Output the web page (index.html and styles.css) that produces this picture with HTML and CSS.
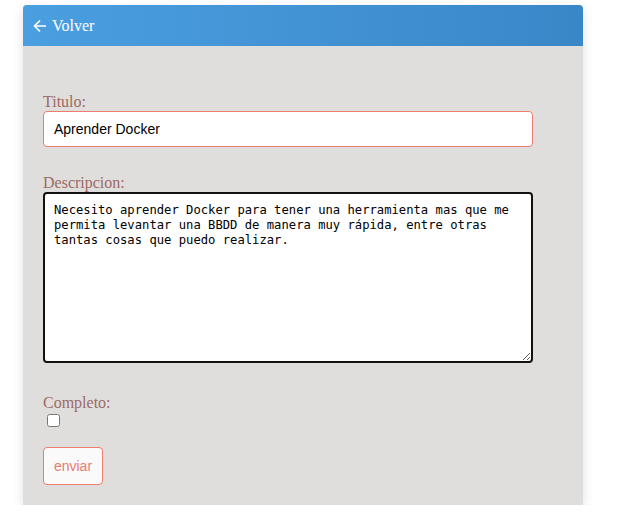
FILE: index.html
```html
<!DOCTYPE html>
<html>
<head>
<meta charset="utf-8">
<link rel="stylesheet" href="styles.css">
</head>
<body>
<div class="card">
  <div class="header">
    <svg class="arrow" width="14" height="14" viewBox="0 0 14 14"><path d="M13 7H1.5M7 1.5L1.5 7L7 12.5" fill="none" stroke="#fff" stroke-width="1.6"/></svg>
    <span>Volver</span>
  </div>
  <form class="body">
    <label class="lbl">Titulo:</label>
    <input class="inp" type="text" value="Aprender Docker">
    <label class="lbl lbl-desc">Descripcion:</label>
    <textarea class="ta">Necesito aprender Docker para tener una herramienta mas que me permita levantar una BBDD de manera muy rápida, entre otras tantas cosas que puedo realizar.</textarea>
    <label class="lbl lbl-comp">Completo:</label>
    <input class="chk" type="checkbox">
    <button class="btn" type="button">enviar</button>
  </form>
</div>
</body>
</html>
```
FILE: styles.css
```css
html, body { margin: 0; padding: 0; background: #fff; }
body { padding: 5px 0 0 23px; }
.card {
  width: 560px;
  height: 500px;
  background: #e0dedd;
  border-radius: 4px 4px 0 0;
  box-shadow: 0 4px 12px rgba(0,0,0,0.12);
  display: flex;
  flex-direction: column;
}
.header {
  height: 41px;
  box-sizing: border-box;
  background: linear-gradient(90deg, #4a9fe1, #3a87c8);
  border-radius: 4px 4px 0 0;
  display: flex;
  align-items: center;
  gap: 5px;
  padding: 1px 0 0 10px;
  color: #fff;
  font-family: "Liberation Serif", serif;
  font-size: 16px;
}
.arrow { display: block; margin-top: -1px; }
.body {
  display: flex;
  flex-direction: column;
  align-items: flex-start;
  padding: 47px 20px 0 20px;
  margin: 0;
}
.lbl {
  font-family: "Liberation Serif", serif;
  font-size: 16px;
  color: #9c6b63;
  line-height: 18px;
}
.inp {
  width: 490px;
  height: 36px;
  box-sizing: border-box;
  border: 1px solid #ec7c6d;
  border-radius: 4px;
  padding: 0 10px;
  font-family: "Liberation Sans", sans-serif;
  font-size: 14px;
  color: #000;
  background: #fff;
  margin: 0;
  outline: none;
}
.lbl-desc { margin-top: 27px; }
.ta {
  width: 490px;
  height: 171px;
  box-sizing: border-box;
  border: 2px solid #111;
  border-radius: 4px;
  padding: 9px 9px;
  font-family: "DejaVu Sans Mono", monospace;
  font-size: 12.2px;
  line-height: 15px;
  color: #000;
  background: #fff;
  margin: 0;
  outline: none;
  resize: vertical;
}
.lbl-comp { margin-top: 31px; }
.chk {
  width: 13px;
  height: 13px;
  margin: 2px 0 0 4px;
}
.btn {
  margin-top: 20px;
  width: 60px;
  height: 38px;
  border: 1px solid #ec7c6d;
  border-radius: 4px;
  background: #fafafa;
  color: #ec7c6d;
  font-family: "Liberation Sans", sans-serif;
  font-size: 14px;
  padding: 0;
}
```
